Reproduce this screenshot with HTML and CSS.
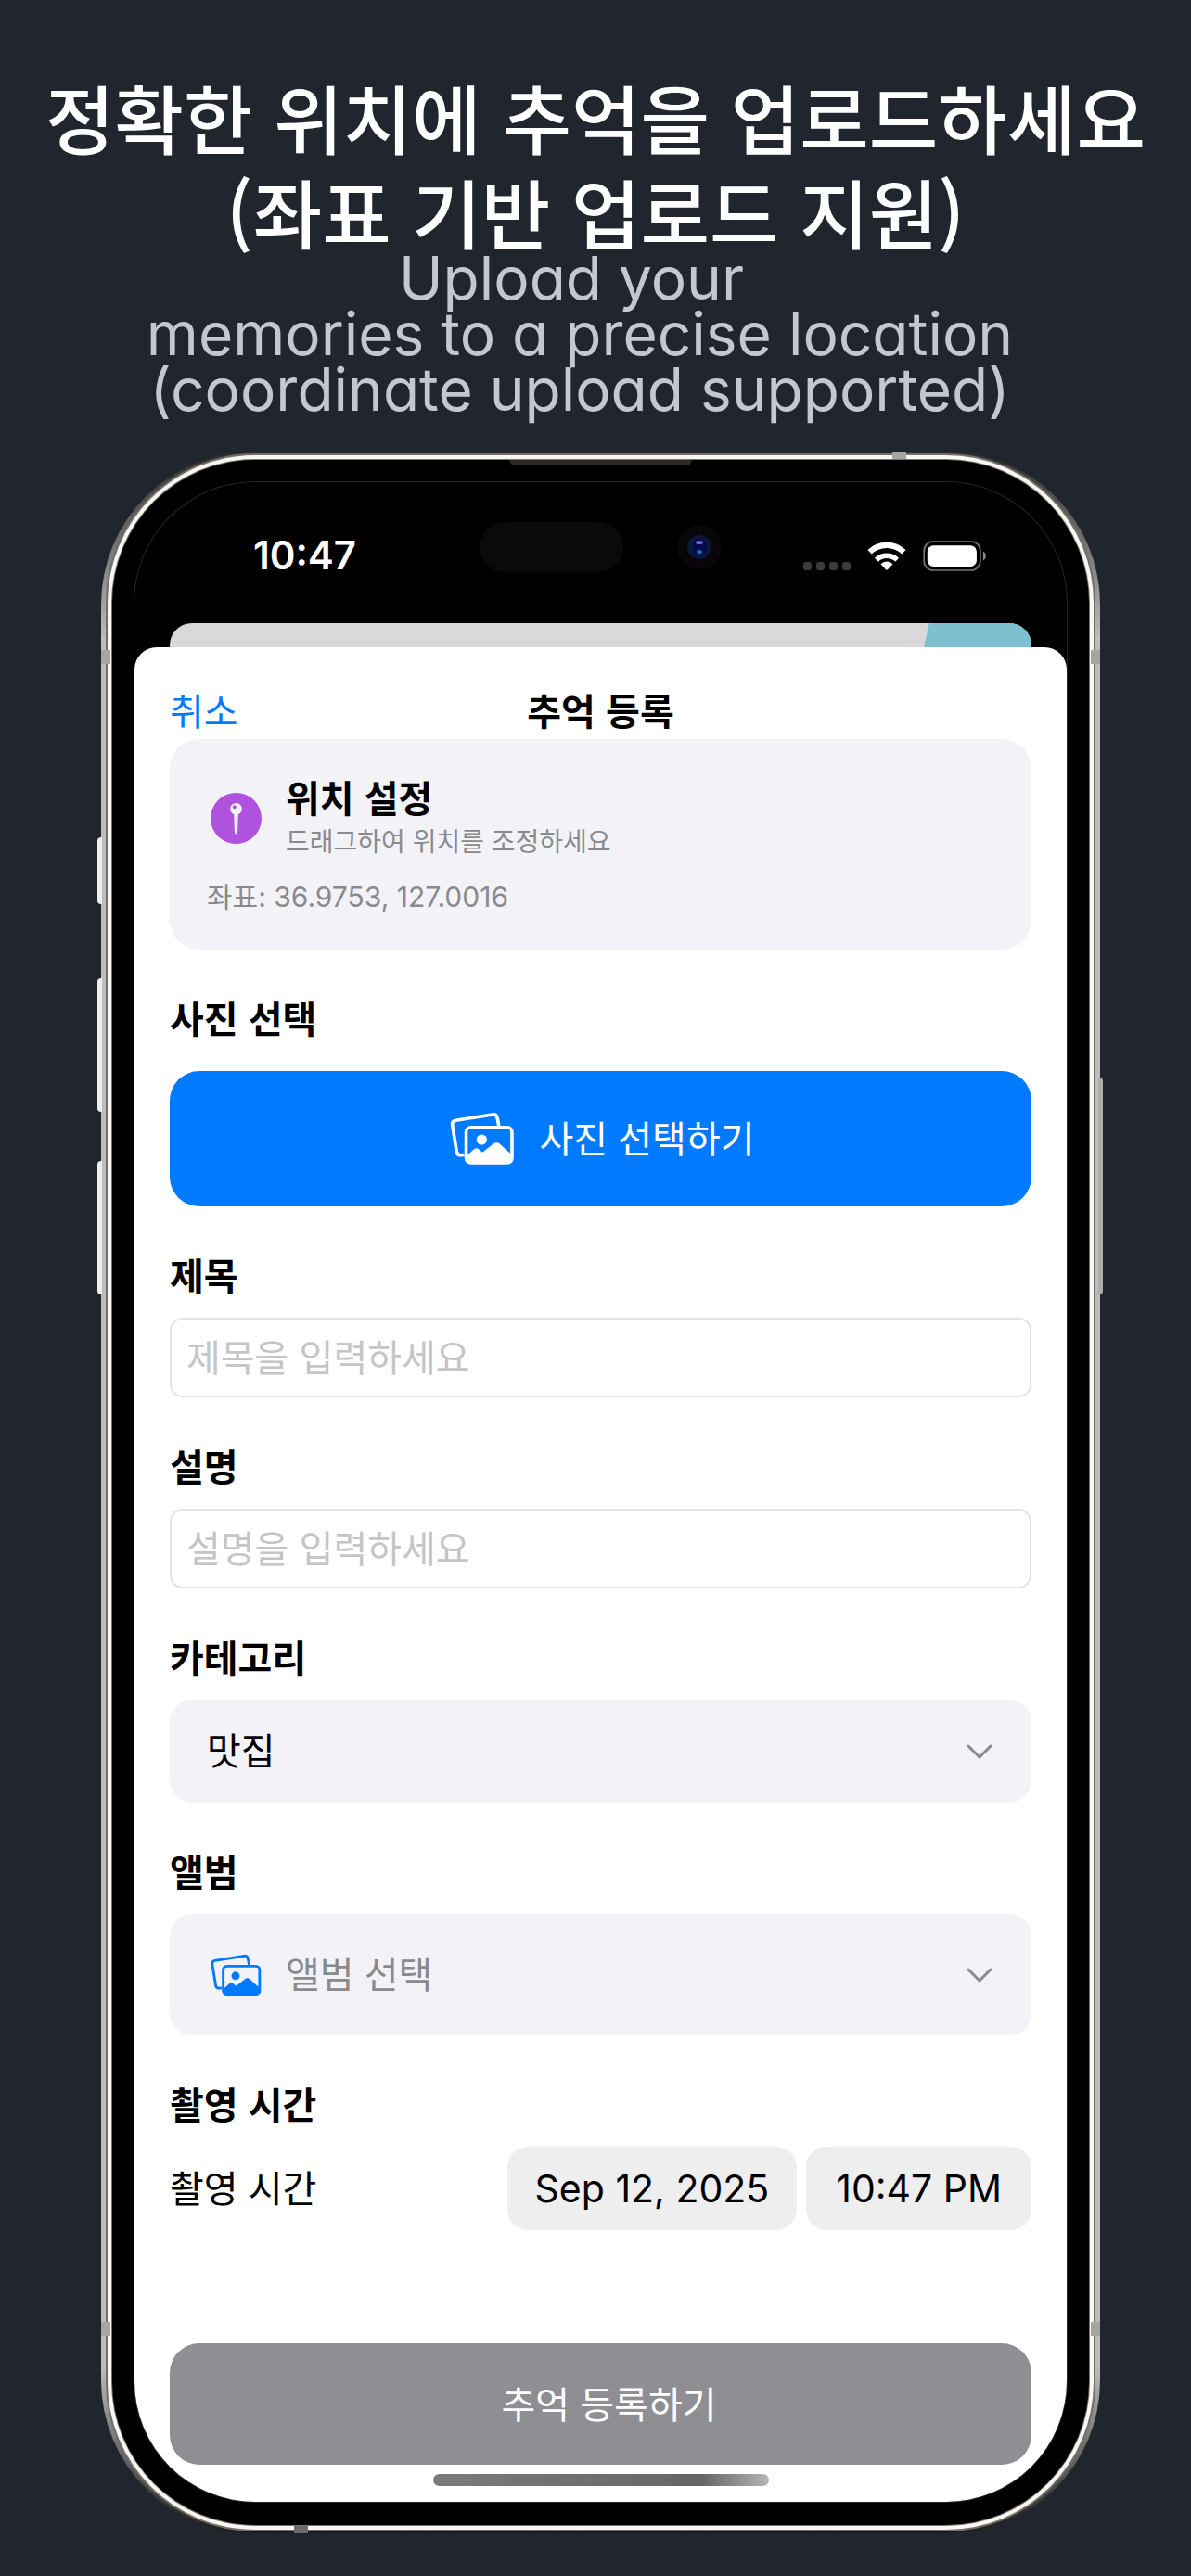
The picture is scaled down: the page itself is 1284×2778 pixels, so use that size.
FILE: index.html
```html
<!DOCTYPE html>
<html lang="ko">
<head>
  <meta charset="UTF-8">
  <meta name="viewport" content="width=device-width, initial-scale=1.0">
  <title>추억 등록</title>
  <link rel="stylesheet" href="styles.css">
</head>
<body>
  <!-- Shared icons -->
  <svg class="icon-defs" aria-hidden="true">
    <symbol id="icon-photos" viewBox="48 58 210 176">
      <path d="M94 199 L84 200 Q71 201 69 189 L55 101 Q53 88 66 86 L186 67 Q199 65 202 78 L207 104" fill="none" stroke="currentColor" stroke-width="11"/>
      <rect x="100" y="109" width="150" height="116" rx="15" fill="none" stroke="currentColor" stroke-width="11"/>
      <circle cx="151" cy="149" r="17" fill="currentColor"/>
      <path d="M100 203 L126 180 Q134 174 142 181 L153 191 L190 162 Q200 155 210 163 L250 199 V212 Q250 225 238 225 H112 Q100 225 100 212 Z" fill="currentColor"/>
    </symbol>
    <symbol id="icon-chevron" viewBox="0 0 28 16">
      <path d="M2 2 L14 14 L26 2" fill="none" stroke="currentColor" stroke-width="3" stroke-linecap="round" stroke-linejoin="round"/>
    </symbol>
  </svg>

  <header class="intro">
    <h1>정확한 위치에 추억을 업로드하세요<br>(좌표 기반 업로드 지원)</h1>
    <p>Upload your&nbsp;<br>memories to a precise location<br>(coordinate upload supported)</p>
  </header>

  <div class="phone">
    <!-- Side keys and antenna bands -->
    <span class="key key-action"></span>
    <span class="key key-up"></span>
    <span class="key key-down"></span>
    <span class="key key-power"></span>

    <div class="bezel">
      <span class="speaker"></span>
      <div class="screen">
        <div class="status-bar">
          <span class="clock">10:47</span>
          <div class="sensors">
            <span class="island"></span>
            <svg class="camera" viewBox="0 0 48 48" aria-hidden="true">
              <circle cx="24" cy="24" r="24" fill="#080608"/>
              <circle cx="24" cy="24" r="13" fill="#0b1738"/>
              <rect x="17" y="15" width="14" height="18" rx="6" fill="#050a50"/>
              <ellipse cx="24" cy="19" rx="4" ry="2" fill="#6a62dc"/>
              <ellipse cx="24" cy="29" rx="3" ry="2" fill="#1b6fa0"/>
            </svg>
          </div>
          <div class="indicators">
            <span class="signal"><i></i><i></i><i></i><i></i></span>
            <svg class="wifi" viewBox="728 336 134 100" aria-hidden="true">
              <g fill="none" stroke="#fff">
                <path d="M739 373 A81 81 0 0 1 851 373" stroke-width="19"/>
                <path d="M761 399 A49 49 0 0 1 829 399" stroke-width="17"/>
              </g>
              <path d="M775 413 A28 28 0 0 1 815 413 L798 431 Q795 434 792 431 Z" fill="#fff"/>
            </svg>
            <svg class="battery" viewBox="914 336 208 100" aria-hidden="true">
              <rect x="917" y="339" width="184" height="94" rx="30" fill="none" stroke="#777" stroke-width="5"/>
              <rect x="928" y="352" width="161" height="69" rx="20" fill="#fff"/>
              <path d="M1110 371 Q1119 376 1119 386 Q1119 396 1110 401 Z" fill="#888"/>
            </svg>
          </div>
        </div>

        <div class="map-peek"><span class="water"></span></div>

        <main class="sheet">
          <div class="sheet-header">
            <button type="button" class="cancel">취소</button>
            <h2>추억 등록</h2>
          </div>

          <form id="memoryForm">
            <div class="location-card">
              <div class="location-row">
                <svg class="pin" viewBox="52 45 166 166" aria-hidden="true">
                  <circle cx="135" cy="128" r="83" fill="#af52de"/>
                  <circle cx="135" cy="97" r="19" fill="#f2f2f7"/>
                  <circle cx="130" cy="91" r="6" fill="#af52de"/>
                  <path d="M128 110 H142 L140 170 Q138 180 135 180 Q132 180 130 170 Z" fill="#f2f2f7"/>
                </svg>
                <div>
                  <h3>위치 설정</h3>
                  <p>드래그하여 위치를 조정하세요</p>
                </div>
              </div>
              <p class="coords">좌표: 36.9753, 127.0016</p>
            </div>

            <section class="photo-group">
              <h3>사진 선택</h3>
              <button type="button" class="photo-button">
                <svg aria-hidden="true"><use href="#icon-photos"/></svg>
                <span>사진 선택하기</span>
              </button>
            </section>

            <section>
              <label class="title" for="title">제목</label>
              <input type="text" id="title" placeholder="제목을 입력하세요">
            </section>

            <section>
              <label class="title" for="description">설명</label>
              <input type="text" id="description" placeholder="설명을 입력하세요">
            </section>

            <section>
              <label class="title" for="category">카테고리</label>
              <div class="select-box">
                <select id="category">
                  <option>맛집</option>
                </select>
                <svg class="chevron" aria-hidden="true"><use href="#icon-chevron"/></svg>
              </div>
            </section>

            <section>
              <label class="title" for="album">앨범</label>
              <div class="select-box album-box">
                <svg class="album-icon" aria-hidden="true"><use href="#icon-photos"/></svg>
                <select id="album">
                  <option>앨범 선택</option>
                </select>
                <svg class="chevron" aria-hidden="true"><use href="#icon-chevron"/></svg>
              </div>
            </section>

            <section>
              <h3>촬영 시간</h3>
              <div class="time-row">
                <span id="timeLabel">촬영 시간</span>
                <button type="button" class="date" aria-describedby="timeLabel">Sep 12, 2025</button>
                <button type="button" class="time" aria-describedby="timeLabel">10:47 PM</button>
              </div>
            </section>

            <button type="submit" class="submit">추억 등록하기</button>
          </form>
          <div class="home-indicator"></div>
        </main>
      </div>
    </div>

    <span class="band band-top"></span>
    <span class="band band-left-upper"></span>
    <span class="band band-right-upper"></span>
    <span class="band band-left-lower"></span>
    <span class="band band-right-lower"></span>
    <span class="band band-bottom"></span>
  </div>
</body>
</html>
```
FILE: styles.css
```css
* {
  box-sizing: border-box;
}
body {
  margin: 0;
  padding: 74px 0 45px;
  background-color: #21252d;
  color: #000;
  font-family: "Noto Sans CJK KR", sans-serif;
  font-size: 40px;
  line-height: 48px;
}
h1, h2, h3, p {
  margin: 0;
}
button, input, select {
  font: inherit;
  color: inherit;
  border: none;
  padding: 0;
  margin: 0;
  background: none;
}
.icon-defs {
  position: absolute;
  width: 0;
  height: 0;
}

/* Heading */
.intro {
  text-align: center;
}
.intro h1 {
  color: #fff;
  font-size: 81px;
  font-weight: 500;
  line-height: 102px;
}
.intro p {
  margin-top: -8px;
  padding-right: 34px;
  color: #c4c7d2;
  font-family: Inter, sans-serif;
  font-feature-settings: "cv11";
  font-size: 64px;
  font-weight: 400;
  line-height: 60px;
}

/* Phone body */
.phone {
  position: relative;
  margin: 37px 98px 0 109px;
  padding: 9px 12px;
  border-radius: 165px;
  background: linear-gradient(#2c2a28, #bdbdbb 9%, #bdbdbb 92%, #1c1b1a);
}
.bezel {
  position: relative;
  padding: 24px 24px 25px;
  border-radius: 154px;
  background-color: #000;
  box-shadow: 0 0 0 1px #77756e, 0 0 0 5px #f8f7f2, 0 0 0 7px #6f6e6b;
}
.screen {
  overflow: hidden;
  border-radius: 130px;
  background-color: #000;
  box-shadow: 0 0 0 1px #242424;
}
.speaker {
  position: absolute;
  top: 0;
  left: 50%;
  width: 198px;
  height: 6px;
  margin-left: -99px;
  background-color: #2b2b2b;
  clip-path: polygon(0 0, 100% 0, 98% 100%, 2% 100%);
}
.key {
  position: absolute;
  left: -4px;
  width: 5px;
  border-radius: 4px 0 0 4px;
  background-color: #efeeea;
}
.key-action {
  top: 416px;
  height: 72px;
}
.key-up {
  top: 568px;
  height: 144px;
}
.key-down {
  top: 765px;
  height: 144px;
}
.key-power {
  top: 675px;
  right: -3px;
  left: auto;
  height: 234px;
  border-radius: 0 4px 4px 0;
  background-color: #b0aeab;
}
.band {
  position: absolute;
  width: 10px;
  height: 15px;
  background-color: #a5a5a3;
}
.band-top {
  top: 0;
  right: 209px;
  width: 15px;
  height: 8px;
}
.band-left-upper {
  top: 214px;
  left: 0;
}
.band-right-upper {
  top: 214px;
  right: 0;
}
.band-left-lower {
  bottom: 213px;
  left: 0;
}
.band-right-lower {
  right: 0;
  bottom: 213px;
}
.band-bottom {
  bottom: 0;
  left: 208px;
  width: 15px;
  height: 8px;
  background-color: #6b6a68;
}

/* Status bar */
.status-bar {
  display: flex;
  align-items: center;
  height: 152px;
  padding: 6px 86px 0 128px;
}
.clock {
  color: #fff;
  font-family: Inter, sans-serif;
  font-size: 42px;
  font-weight: 600;
}
.sensors {
  display: flex;
  align-items: center;
  gap: 58px;
  margin: 0 0 18px 133px;
}
.island {
  width: 155px;
  height: 54px;
  border-radius: 27px;
  background-color: #0a0a0a;
}
.camera {
  width: 48px;
  height: 48px;
}
.indicators {
  display: flex;
  align-items: center;
  gap: 17px;
  margin-left: auto;
}
.signal {
  display: flex;
  gap: 5px;
  padding-top: 22px;
}
.signal i {
  width: 9px;
  height: 9px;
  border-radius: 3px;
  background-color: #3c3c3c;
}
.wifi {
  width: 44px;
  height: 33px;
}
.battery {
  width: 69px;
  height: 33px;
}

/* Map behind the sheet */
.map-peek {
  display: flex;
  justify-content: flex-end;
  height: 26px;
  margin: 0 38px;
  overflow: hidden;
  border-radius: 24px 24px 0 0;
  background-color: #d9d9d9;
}
.water {
  width: 116px;
  background-color: #7fc0d0;
  clip-path: polygon(5% 0, 100% 0, 100% 100%, 0 100%);
}

/* Sheet */
.sheet {
  padding: 43px 38px 17px;
  border-radius: 24px 24px 0 0;
  background-color: #fff;
}
.sheet-header {
  display: grid;
  grid-template-columns: 1fr auto 1fr;
  margin-bottom: 8px;
}
.sheet-header h2 {
  font-size: 40px;
  font-weight: 600;
}
.cancel {
  justify-self: start;
  color: #007aff;
}
form {
  display: flex;
  flex-direction: column;
  gap: 51px;
}
section {
  display: flex;
  flex-direction: column;
  gap: 25px;
}
h3, .title {
  font-size: 40px;
  font-weight: 600;
  line-height: 44px;
}
.location-card {
  padding: 38px 40px 34px;
  border-radius: 32px;
  background-color: #f2f2f7;
  color: #8a8a8e;
  font-size: 28px;
  line-height: 46px;
}
.location-card h3 {
  line-height: 48px;
  color: #000;
}
.location-row {
  display: flex;
  align-items: center;
  gap: 26px;
  padding-left: 4px;
}
.pin {
  width: 55px;
  height: 55px;
}
.coords {
  margin-top: 15px;
  font-family: Inter, "Noto Sans CJK KR", sans-serif;
  font-size: 30px;
}
.photo-group {
  gap: 36px;
}
.photo-button {
  display: flex;
  align-items: center;
  justify-content: center;
  gap: 27px;
  height: 146px;
  padding-left: 3px;
  border-radius: 32px;
  background-color: #007aff;
  color: #fff;
}
.photo-button svg {
  width: 70px;
  height: 58px;
}
.photo-button span {
  padding-bottom: 4px;
}
input {
  width: 100%;
  height: 86px;
  padding: 0 16px 4px;
  border: 2px solid #e4e4e5;
  border-radius: 14px;
}
input::placeholder {
  color: #c5c5c7;
}
.select-box {
  display: flex;
  align-items: center;
  gap: 26px;
  height: 111px;
  padding: 0 42px 0 40px;
  border-radius: 24px;
  background-color: #f2f2f7;
}
.select-box select {
  flex: 1;
  padding-bottom: 6px;
  appearance: none;
}
.album-box {
  height: 131px;
  padding-left: 44px;
  color: #8a8a8e;
}
.album-icon {
  width: 55px;
  height: 46px;
  color: #007aff;
}
.chevron {
  width: 28px;
  height: 16px;
  color: #8a8a8e;
}
.time-row {
  display: flex;
  align-items: center;
  gap: 10px;
}
.time-row span {
  flex: 1;
  padding-bottom: 4px;
}
.date, .time {
  height: 90px;
  padding: 0 30px;
  border-radius: 22px;
  background-color: #eeeeef;
  font-family: Inter, sans-serif;
  font-size: 41px;
}
.time {
  padding: 0 32px;
}
.submit {
  height: 131px;
  margin-top: 71px;
  padding: 0 0 4px 18px;
  border-radius: 32px;
  background-color: #8e8e93;
  color: #fff;
}
.home-indicator {
  width: 362px;
  height: 13px;
  margin: 10px auto 0;
  border-radius: 7px;
  background: linear-gradient(to right, #7b7b7b, #666 80%, #b5b5b5);
}
```
